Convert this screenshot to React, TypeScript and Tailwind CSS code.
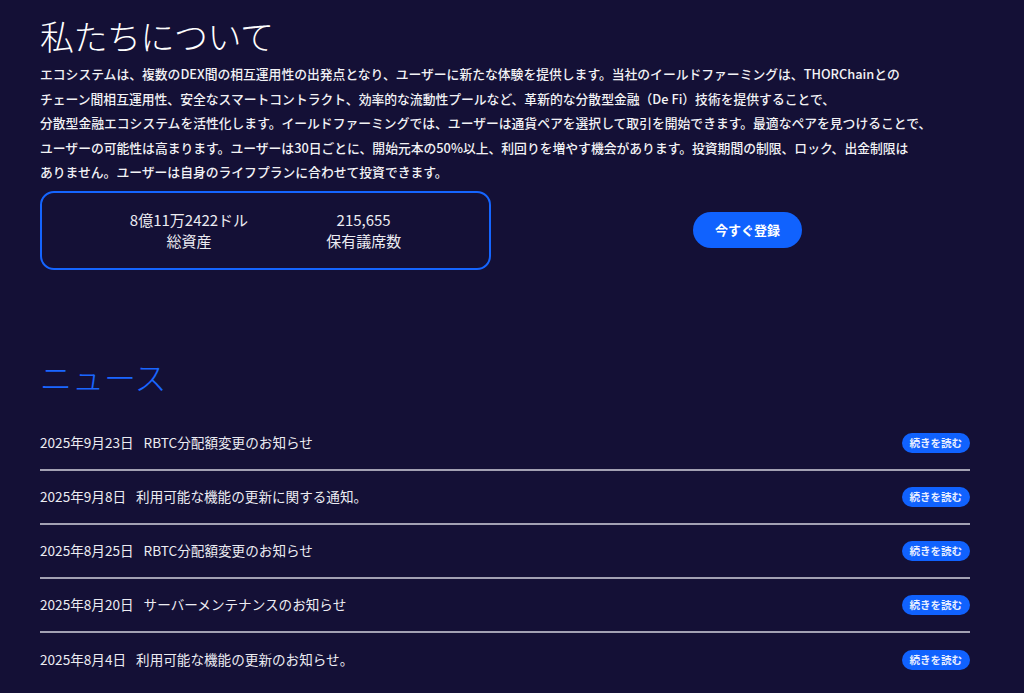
import React from "react";

const news = [
  { date: "2025年9月23日", title: "RBTC分配額変更のお知らせ" },
  { date: "2025年9月8日", title: "利用可能な機能の更新に関する通知。" },
  { date: "2025年8月25日", title: "RBTC分配額変更のお知らせ" },
  { date: "2025年8月20日", title: "サーバーメンテナンスのお知らせ" },
  { date: "2025年8月4日", title: "利用可能な機能の更新のお知らせ。" },
];

export default function App() {
  return (
    <div
      className="min-h-[693px] w-[1024px] overflow-hidden bg-[#141036] text-white"
      style={{ fontFamily: '"Noto Sans CJK JP", "Noto Sans", sans-serif' }}
    >
      <div className="px-[40px] pt-[15px]">
        <h1 className="text-[34px] font-light leading-[42px] tracking-[-0.5px]">私たちについて</h1>
        <p className="mt-[5px] whitespace-nowrap text-[12.8px] font-medium leading-[24.5px] text-[#f2f2f5]">
          エコシステムは、複数のDEX間の相互運用性の出発点となり、ユーザーに新たな体験を提供します。当社のイールドファーミングは、THORChainとの
          <br />
          チェーン間相互運用性、安全なスマートコントラクト、効率的な流動性プールなど、革新的な分散型金融（De Fi）技術を提供することで、
          <br />
          分散型金融エコシステムを活性化します。イールドファーミングでは、ユーザーは通貨ペアを選択して取引を開始できます。最適なペアを見つけることで、
          <br />
          ユーザーの可能性は高まります。ユーザーは30日ごとに、開始元本の50%以上、利回りを増やす機会があります。投資期間の制限、ロック、出金制限は
          <br />
          ありません。ユーザーは自身のライフプランに合わせて投資できます。
        </p>

        <div className="mt-[6px] flex items-center">
          <div className="flex h-[79px] w-[451px] shrink-0 items-center justify-center gap-[78px] rounded-[14px] border-2 border-[#1565ff] text-[15px] leading-[21px] text-[#ececf2]">
            <div className="text-center">
              <div>8億11万2422ドル</div>
              <div>総資産</div>
            </div>
            <div className="text-center">
              <div>215,655</div>
              <div>保有議席数</div>
            </div>
          </div>
          <div className="flex flex-1 justify-center pl-[20px]">
            <button className="h-[36px] rounded-full bg-[#1062fe] px-[22px] text-[13px] font-bold text-white">
              今すぐ登録
            </button>
          </div>
        </div>

        <h2 className="mt-[85px] text-[32px] font-light leading-[43px] text-[#1a66ff]">ニュース</h2>

        <div className="mt-[19px] w-[930px]">
          {news.map((n, i) => (
            <div
              key={i}
              className={`flex h-[54px] items-center justify-between ${
                i < news.length - 1 ? "border-b-2 border-[#a3a1b3]" : ""
              }`}
            >
              <div className="whitespace-nowrap text-[13.6px] text-[#ececf2]">
                <span>{n.date}</span>
                <span className="ml-[10px]">{n.title}</span>
              </div>
              <button className="h-[20px] rounded-full bg-[#1062fe] px-[8px] text-[10.5px] font-bold leading-[20px] text-[#e8eeff]">
                続きを読む
              </button>
            </div>
          ))}
        </div>
      </div>
    </div>
  );
}
